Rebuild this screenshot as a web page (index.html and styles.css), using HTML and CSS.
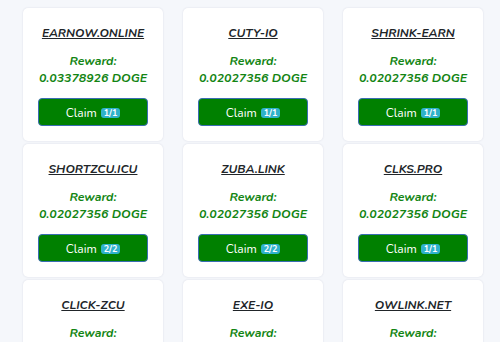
FILE: index.html
```html
<!DOCTYPE html>
<html>
<head>
<meta charset="utf-8">
<link rel="stylesheet" href="styles.css">
</head>
<body>
<div class="grid">
  <div class="card"><a class="title">EARNOW.ONLINE</a><div class="label">Reward:</div><div class="value">0.03378926 DOGE</div><button class="claim">Claim <span class="badge">1/1</span></button></div>
  <div class="card"><a class="title">CUTY-IO</a><div class="label">Reward:</div><div class="value">0.02027356 DOGE</div><button class="claim">Claim <span class="badge">1/1</span></button></div>
  <div class="card"><a class="title">SHRINK-EARN</a><div class="label">Reward:</div><div class="value">0.02027356 DOGE</div><button class="claim">Claim <span class="badge">1/1</span></button></div>
  <div class="card"><a class="title">SHORTZCU.ICU</a><div class="label">Reward:</div><div class="value">0.02027356 DOGE</div><button class="claim">Claim <span class="badge">2/2</span></button></div>
  <div class="card"><a class="title">ZUBA.LINK</a><div class="label">Reward:</div><div class="value">0.02027356 DOGE</div><button class="claim">Claim <span class="badge">2/2</span></button></div>
  <div class="card"><a class="title">CLKS.PRO</a><div class="label">Reward:</div><div class="value">0.02027356 DOGE</div><button class="claim">Claim <span class="badge">1/1</span></button></div>
  <div class="card"><a class="title">CLICK-ZCU</a><div class="label">Reward:</div><div class="value">0.02027356 DOGE</div><button class="claim">Claim <span class="badge">1/1</span></button></div>
  <div class="card"><a class="title">EXE-IO</a><div class="label">Reward:</div><div class="value">0.02027356 DOGE</div><button class="claim">Claim <span class="badge">1/1</span></button></div>
  <div class="card"><a class="title">OWLINK.NET</a><div class="label">Reward:</div><div class="value">0.02027356 DOGE</div><button class="claim">Claim <span class="badge">1/1</span></button></div>
</div>
</body>
</html>
```
FILE: styles.css
```css
html, body {
  margin: 0;
  padding: 0;
  background: #f5f7fb;
  font-family: "Nunito", "Open Sans", sans-serif;
}
.grid {
  display: grid;
  grid-template-columns: repeat(3, 140px);
  column-gap: 20px;
  row-gap: 3px;
  padding: 8px 0 0 23px;
}
.card {
  background: #fff;
  border-radius: 5px;
  box-shadow: 0 0 2px rgba(40, 50, 90, 0.14);
  height: 133px;
  box-sizing: border-box;
  padding-top: 16px;
  display: flex;
  flex-direction: column;
  align-items: center;
}
.title {
  font-size: 12px;
  line-height: 18px;
  font-weight: 700;
  font-style: italic;
  color: #212529;
  text-decoration: underline;
  margin-bottom: 11px;
}
.label, .value {
  font-size: 12.3px;
  line-height: 17px;
  font-weight: 700;
  font-style: italic;
  color: #138513;
}
.claim {
  margin-top: 11px;
  width: 110px;
  height: 28px;
  background: #008000;
  border: 1px solid #3a6db2;
  border-radius: 4px;
  color: #fff;
  font-family: inherit;
  font-size: 12px;
  display: flex;
  align-items: center;
  justify-content: center;
  gap: 4px;
  padding: 1px 0 0;
}
.badge {
  background: #2fb2cb;
  color: #fff;
  font-size: 9px;
  font-weight: 700;
  border-radius: 3px;
  padding: 0 3px;
  line-height: 10px;
  height: 10px;
}
```
